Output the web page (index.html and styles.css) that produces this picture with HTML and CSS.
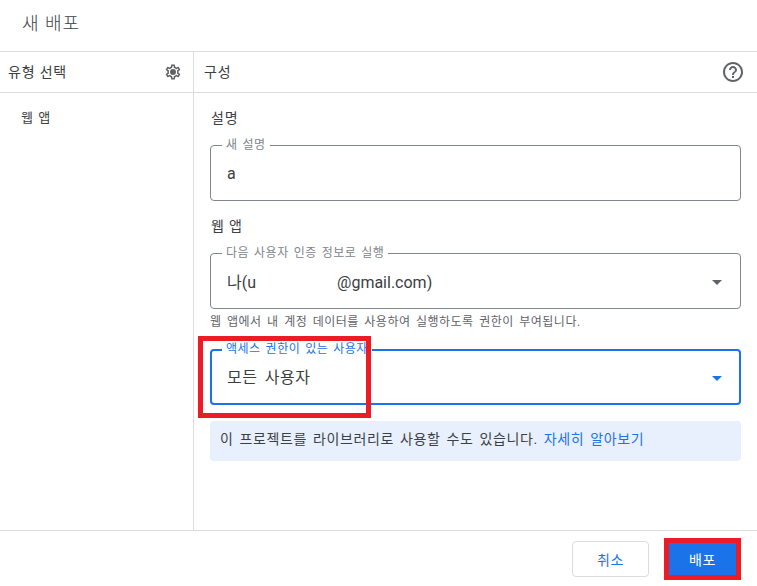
FILE: index.html
```html
<!DOCTYPE html>
<html lang="ko">
<head>
    <meta charset="UTF-8">
    <meta name="viewport" content="width=device-width, initial-scale=1.0">
    <title>새 배포</title>
    <link rel="stylesheet" href="styles.css">
</head>
<body>
    <div class="dialog">
        <header class="dialog-title">새 배포</header>
        <div class="columns">
            <aside class="type-col">
                <div class="col-head">
                    <span>유형 선택</span>
                    <svg class="gear" viewBox="0 0 24 24" width="18" height="18">
                        <path fill="#5f6368" fill-rule="evenodd" d="M19.43 12.98c.04-.32.07-.64.07-.98s-.03-.66-.07-.98l2.11-1.65c.19-.15.24-.42.12-.64l-2-3.46c-.12-.22-.39-.3-.61-.22l-2.49 1c-.52-.4-1.08-.73-1.69-.98l-.38-2.65C14.46 2.18 14.25 2 14 2h-4c-.25 0-.46.18-.49.42l-.38 2.65c-.61.25-1.17.59-1.69.98l-2.49-1c-.23-.09-.49 0-.61.22l-2 3.46c-.13.22-.07.49.12.64l2.11 1.65c-.04.32-.07.65-.07.98s.03.66.07.98l-2.11 1.65c-.19.15-.24.42-.12.64l2 3.46c.12.22.39.3.61.22l2.49-1c.52.4 1.08.73 1.69.98l.38 2.65c.03.24.24.42.49.42h4c.25 0 .46-.18.49-.42l.38-2.65c.61-.25 1.17-.59 1.69-.98l2.49 1c.23.09.49 0 .61-.22l2-3.46c.12-.22.07-.49-.12-.64l-2.11-1.65zM17.45 11.27c.04.31.05.52.05.73s-.02.43-.05.73l-.14 1.13.89.7 1.08.84-.7 1.21-1.27-.51-1.04-.42-.9.68c-.43.32-.84.56-1.25.73l-1.06.43-.16 1.13-.2 1.35h-1.4l-.19-1.35-.16-1.13-1.06-.43c-.43-.18-.83-.41-1.23-.71l-.91-.7-1.06.43-1.27.51-.7-1.21 1.08-.84.89-.7-.14-1.13c-.03-.31-.05-.54-.05-.74s.02-.43.05-.73l.14-1.13-.89-.7-1.08-.84.7-1.21 1.27.51 1.04.42.9-.68c.43-.32.84-.56 1.25-.73l1.06-.43.16-1.13.2-1.35h1.39l.19 1.35.16 1.13 1.06.43c.43.18.83.41 1.23.71l.91.7 1.06-.43 1.27-.51.7 1.21-1.07.85-.89.7.14 1.13zM12 8a4 4 0 1 0 0 8 4 4 0 0 0 0-8z"/>
                    </svg>
                </div>
                <div class="type-item">웹 앱</div>
            </aside>
            <section class="config-col">
                <div class="col-head config-head">
                    <span>구성</span>
                    <svg class="help" viewBox="0 0 24 24" width="24" height="24">
                        <path fill="#5f6368" d="M11 18h2v-2h-2v2zm1-16C6.48 2 2 6.48 2 12s4.48 10 10 10 10-4.48 10-10S17.52 2 12 2zm0 18c-4.41 0-8-3.59-8-8s3.59-8 8-8 8 3.59 8 8-3.59 8-8 8zm0-14c-2.21 0-4 1.79-4 4h2c0-1.1.9-2 2-2s2 .9 2 2c0 2-3 1.75-3 5h2c0-2.25 3-2.5 3-5 0-2.21-1.79-4-4-4z"/>
                    </svg>
                </div>
                <div class="config-body">
                    <div class="section-label first">설명</div>
                    <div class="field">
                        <span class="field-label">새 설명</span>
                        <span class="field-value">a</span>
                    </div>
                    <div class="section-label">웹 앱</div>
                    <div class="field">
                        <span class="field-label">다음 사용자 인증 정보로 실행</span>
                        <span class="field-value email">나(u<span class="redacted"></span>@gmail.com)</span>
                        <span class="arrow"></span>
                    </div>
                    <div class="hint">웹 앱에서 내 계정 데이터를 사용하여 실행하도록 권한이 부여됩니다.</div>
                    <div class="field focused">
                        <span class="field-label">액세스 권한이 있는 사용자</span>
                        <span class="field-value korean">모든 사용자</span>
                        <span class="arrow"></span>
                        <div class="mark mark-access"></div>
                    </div>
                    <div class="notice">이 프로젝트를 라이브러리로 사용할 수도 있습니다. <a href="#">자세히 알아보기</a></div>
                </div>
            </section>
        </div>
        <footer class="dialog-actions">
            <button class="btn btn-cancel">취소</button>
            <button class="btn btn-deploy">배포</button>
        </footer>
    </div>
</body>
</html>
```

FILE: styles.css
```css
* {
    box-sizing: border-box;
}

body {
    margin: 0;
    background-color: #fff;
    font-family: Roboto, "Noto Sans CJK KR", sans-serif;
    color: #3c4043;
}

.dialog {
    display: flex;
    flex-direction: column;
    height: 586px;
    overflow: hidden;
}

.dialog-title {
    height: 52px;
    padding: 12px 0 0 22px;
    font-size: 18px;
    line-height: 24px;
    letter-spacing: 1px;
    font-weight: 300;
    border-bottom: 1px solid #dadce0;
}

.columns {
    display: flex;
    flex: 1;
    min-height: 0;
}

.type-col {
    width: 194px;
    border-right: 1px solid #dadce0;
}

.config-col {
    flex: 1;
}

.col-head {
    display: flex;
    justify-content: space-between;
    align-items: center;
    height: 41px;
    padding: 0 11px 0 8px;
    font-size: 14px;
    letter-spacing: 0.8px;
    border-bottom: 1px solid #dadce0;
}

.col-head span {
    margin-bottom: 3px;
}

.config-head {
    padding: 0 12px 0 10px;
}

.type-item {
    padding: 15px 0 0 21px;
    font-size: 13px;
    line-height: 20px;
    letter-spacing: 0.5px;
    word-spacing: 1px;
}

.config-body {
    padding: 15px 16px 0 16px;
}

.section-label {
    margin-top: 15px;
    margin-bottom: 17px;
    padding-left: 1px;
    font-size: 14px;
    line-height: 20px;
    letter-spacing: 0.8px;
}

.section-label.first {
    margin-top: 0;
}

.field {
    position: relative;
    display: flex;
    align-items: center;
    height: 56px;
    padding: 0 16px;
    border: 1px solid #80868b;
    border-radius: 4px;
}

.field-label {
    position: absolute;
    top: -8px;
    left: 11px;
    padding: 0 4px;
    background-color: #fff;
    font-size: 12px;
    line-height: 14px;
    letter-spacing: 0.5px;
    word-spacing: 1.5px;
    color: #80868b;
}

.field-value {
    font-size: 16px;
    color: #3c4043;
}

.field-value.email {
    margin-bottom: 1px;
}

.field-value.korean {
    margin-bottom: 3px;
    letter-spacing: 0.6px;
    word-spacing: 2.5px;
}

.redacted {
    display: inline-block;
    width: 81px;
}

.arrow {
    position: absolute;
    right: 18px;
    top: 26px;
    border-left: 5px solid transparent;
    border-right: 5px solid transparent;
    border-top: 5px solid #5f6368;
}

.hint {
    margin: 5px 0 19px;
    font-size: 12px;
    line-height: 16px;
    letter-spacing: 0.5px;
    word-spacing: 2px;
    color: #5f6368;
}

.focused {
    border: 2px solid #1a73e8;
    padding: 0 15px;
}

.focused .field-label {
    top: -9px;
    left: 10px;
    color: #1a73e8;
}

.focused .arrow {
    top: 25px;
    right: 17px;
    border-top-color: #1a73e8;
}

/* red annotation boxes drawn over the screenshot */
.mark {
    position: absolute;
    border: 5px solid #ed1c24;
    pointer-events: none;
}

.mark-access {
    left: -14px;
    top: -15px;
    width: 173px;
    height: 82px;
}

.notice {
    margin-top: 16px;
    height: 40px;
    padding: 0 10px;
    background-color: #e8f0fe;
    border-radius: 4px;
    font-size: 14px;
    line-height: 36px;
    letter-spacing: 0.6px;
    word-spacing: 2px;
}

.notice a {
    color: #1a73e8;
    text-decoration: none;
}

.dialog-actions {
    display: flex;
    justify-content: flex-end;
    align-items: center;
    gap: 15px;
    height: 56px;
    padding: 0 16px 0 0;
    border-top: 1px solid #dadce0;
}

.btn {
    font-family: inherit;
    font-size: 14px;
    letter-spacing: 0.5px;
    border-radius: 4px;
    cursor: pointer;
}

.btn-cancel {
    width: 77px;
    height: 36px;
    background-color: #fff;
    border: 1px solid #dadce0;
    color: #1a73e8;
}

.btn-deploy {
    width: 77px;
    height: 42px;
    background-color: #1a73e8;
    border: 5px solid #ed1c24;
    border-radius: 0;
    color: #fff;
}
```
